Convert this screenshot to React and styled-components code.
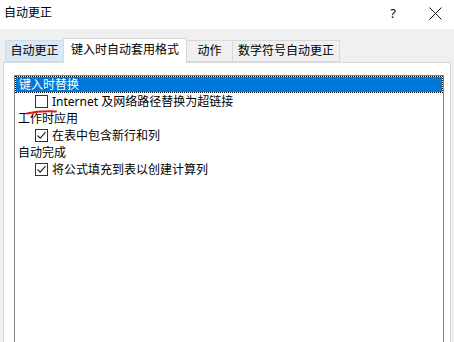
import React from "react";
import styled, { createGlobalStyle } from "styled-components";

const Global = createGlobalStyle`
  html, body { margin: 0; padding: 0; background: #f0f0f0; }
  body { font-family: "Noto Sans", "Noto Sans CJK SC", sans-serif; }
`;

const Window = styled.div`
  position: relative;
  width: 454px;
  height: 342px;
  overflow: hidden;
  background: #f0f0f0;
  font-size: 12px;
  color: #000;
`;

const TitleBar = styled.div`
  height: 29px;
  background: #fff;
  display: flex;
  align-items: center;
  padding-left: 4px;
  box-sizing: border-box;
`;

const Title = styled.div`
  flex: 1;
  line-height: 16px;
  padding-bottom: 3px;
`;

const TitleButton = styled.div`
  width: ${(p) => p.$w}px;
  height: 29px;
  display: flex;
  align-items: center;
  justify-content: center;
  font-size: 13px;
  padding-bottom: 3px;
  box-sizing: border-box;
`;

const Body = styled.div`
  padding: 9px 3px 0 3px;
`;

const TabStrip = styled.div`
  display: flex;
  align-items: flex-end;
  height: 24px;
  padding-left: 2px;
  position: relative;
  z-index: 1;
`;

const Tab = styled.div`
  width: ${(p) => p.$w}px;
  height: ${(p) => (p.$active ? 25 : 22)}px;
  margin-bottom: ${(p) => (p.$active ? -1 : 0)}px;
  box-sizing: border-box;
  border: 1px solid ${(p) => (p.$hover ? "#cbdcec" : "#d9d9d9")};
  border-bottom: ${(p) => (p.$active ? "none" : undefined)};
  margin-left: ${(p) => (p.$first ? 0 : -1)}px;
  background: ${(p) => (p.$active ? "#fff" : p.$hover ? "#d9e8f6" : "#f0f0f0")};
  display: flex;
  align-items: center;
  justify-content: center;
  line-height: 14px;
  padding-bottom: ${(p) => (p.$active ? 3 : 0)}px;
  position: relative;
  z-index: ${(p) => (p.$active ? 2 : 1)};
`;

const Panel = styled.div`
  background: #fff;
  border: 1px solid #d9d9d9;
  height: 300px;
  padding: 12px 0 0 10px;
  box-sizing: border-box;
`;

const ListBox = styled.div`
  width: 430px;
  height: 300px;
  border: 1px solid #828282;
  box-sizing: border-box;
  background: #fff;
`;

const Row = styled.div`
  height: 17px;
  display: flex;
  align-items: center;
  box-sizing: border-box;
  line-height: 15px;
  padding-left: ${(p) => (p.$indent ? 20 : 3)}px;
  ${(p) =>
    p.$selected &&
    `
    background: #0078d7;
    background-clip: padding-box;
    color: #fff;
    border: 1px dotted #000;
    padding-left: 3px;
  `}
`;

const Box = styled.div`
  width: 13px;
  height: 13px;
  border: 1px solid #333;
  box-sizing: border-box;
  background: #fff;
  margin-right: 4px;
  display: flex;
  align-items: center;
  justify-content: center;
`;

const Label = styled.span`
  white-space: nowrap;
`;

const Annotation = styled.svg`
  position: absolute;
  left: 26px;
  top: 108px;
  pointer-events: none;
`;

function Check({ checked }) {
  return (
    <Box>
      {checked && (
        <svg width="11" height="11" viewBox="0 0 11 11">
          <path d="M1.5 5.5 L4.2 8.2 L9.5 2.2" fill="none" stroke="#222" strokeWidth="1.1" />
        </svg>
      )}
    </Box>
  );
}

const tabs = [
  { label: "自动更正", w: 59, hover: true },
  { label: "键入时自动套用格式", w: 124, active: true },
  { label: "动作", w: 47 },
  { label: "数学符号自动更正", w: 108 },
];

const rows = [
  { label: "键入时替换", selected: true },
  { label: "Internet 及网络路径替换为超链接", check: false },
  { label: "工作时应用" },
  { label: "在表中包含新行和列", check: true },
  { label: "自动完成" },
  { label: "将公式填充到表以创建计算列", check: true },
];

export default function App() {
  return (
    <Window>
      <Global />
      <TitleBar>
        <Title>自动更正</Title>
        <TitleButton $w={48}>?</TitleButton>
        <TitleButton $w={37}>
          <svg width="13" height="13" viewBox="0 0 13 13">
            <path d="M0.5 0.5 L12.5 12.5 M12.5 0.5 L0.5 12.5" stroke="#111" strokeWidth="1" />
          </svg>
        </TitleButton>
      </TitleBar>
      <Body>
        <TabStrip>
          {tabs.map((t, i) => (
            <Tab key={t.label} $w={t.w} $active={t.active} $hover={t.hover} $first={i === 0}>
              {t.label}
            </Tab>
          ))}
        </TabStrip>
        <Panel>
          <ListBox>
            {rows.map((r) => (
              <Row key={r.label} $selected={r.selected} $indent={r.check !== undefined}>
                {r.check !== undefined && <Check checked={r.check} />}
                <Label>{r.label}</Label>
              </Row>
            ))}
          </ListBox>
        </Panel>
      </Body>
      <Annotation width="32" height="8" viewBox="0 0 32 8">
        <path d="M1 5.5 Q 14 2.5 30 3.5" fill="none" stroke="#e01818" strokeWidth="2" strokeLinecap="round" />
      </Annotation>
    </Window>
  );
}
